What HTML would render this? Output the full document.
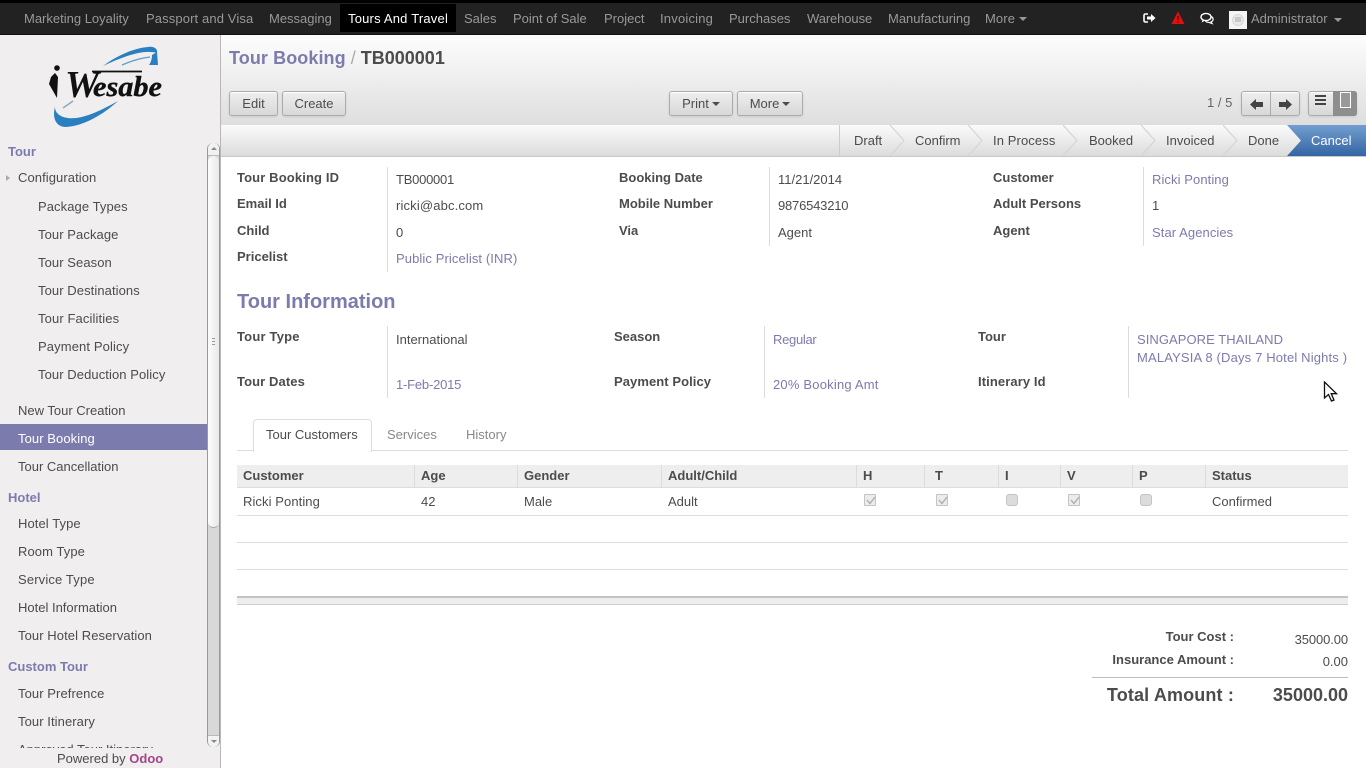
<!DOCTYPE html>
<html><head><meta charset="utf-8"><title>Tour Booking</title>
<style>
html,body{margin:0;padding:0;width:1366px;height:768px;overflow:hidden;background:#fff;font-family:"Liberation Sans",sans-serif;font-size:13px;color:#4c4c4c}
.t{position:absolute;white-space:nowrap;line-height:18px;margin-top:1px}
.s{letter-spacing:.08px}
.b{font-weight:bold}
.l{color:#7c7bad}
.n{color:#999}
.box{position:absolute}
.btn{position:absolute;top:91px;height:23px;line-height:23px;text-align:center;border:1px solid #ababab;border-radius:3px;background:linear-gradient(#efefef,#d8d8d8);box-shadow:0 1px 2px rgba(0,0,0,.1),inset 0 1px 0 #fff;color:#4c4c4c}
.car{display:inline-block;width:0;height:0;border-left:4px solid transparent;border-right:4px solid transparent;border-top:4px solid #4c4c4c;vertical-align:2px;margin-left:3px}
.v{position:absolute;width:1px;background:#dcdcdc}
.h{position:absolute;left:237px;width:1111px;height:1px;background:#ddd}
.th{position:absolute;top:465px;height:22px;width:1px;background:#dcdcdc}
.cb{position:absolute;top:494px;width:10px;height:10px;border:1px solid #c4c4c4;border-radius:3px;background:#dcdcdc}
.cb.c{border-radius:1px;background:#ececec}
</style></head><body>

<!-- top bar -->
<div class="box" style="left:0;top:0;width:1366px;height:35px;background:#222;border-top:3px solid #000;box-sizing:border-box;border-bottom:1px solid #111"></div>
<div class="box" style="left:340px;top:4px;width:116px;height:28px;background:#000"></div>
<div class="t n" style="left:24px;top:9px">Marketing Loyality</div>
<div class="t n" style="left:146px;top:9px;letter-spacing:.12px">Passport and Visa</div>
<div class="t n" style="left:269px;top:9px">Messaging</div>
<div class="t" style="left:348px;top:9px;color:#fff;letter-spacing:.2px">Tours And Travel</div>
<div class="t n" style="left:464px;top:9px">Sales</div>
<div class="t n" style="left:513px;top:9px">Point of Sale</div>
<div class="t n" style="left:604px;top:9px">Project</div>
<div class="t n" style="left:660px;top:9px;letter-spacing:.2px">Invoicing</div>
<div class="t n" style="left:729px;top:9px">Purchases</div>
<div class="t n" style="left:807px;top:9px;letter-spacing:-.1px">Warehouse</div>
<div class="t n" style="left:888px;top:9px">Manufacturing</div>
<div class="t n" style="left:985px;top:9px;letter-spacing:.1px">More</div>
<div class="box" style="left:1019px;top:17px;border-left:4px solid transparent;border-right:4px solid transparent;border-top:4px solid #999"></div>

<svg class="box" style="left:1143px;top:12px" width="13" height="13" viewBox="0 0 13 13"><path d="M5 2H2.500Q1 2 1 3.500v5Q1 10 2.500 10H5" fill="none" stroke="#fff" stroke-width="1.600"/><path d="M4 4.500H8V2l4.500 4L8 10V7.500H4z" fill="#fff"/></svg>
<svg class="box" style="left:1171px;top:11px" width="14" height="14" viewBox="0 0 14 14"><path d="M7 .5 13.500 13H.5z" fill="#e01010"/><rect x="6.400" y="5" width="1.300" height="4" fill="#600"/><rect x="6.400" y="10" width="1.300" height="1.400" fill="#600"/></svg>
<svg class="box" style="left:1200px;top:12px" width="14" height="13" viewBox="0 0 14 13"><ellipse cx="6" cy="5" rx="5" ry="3.600" fill="none" stroke="#fff" stroke-width="1.400"/><path d="M2.500 8 1.500 10.500 5 8.600" fill="#fff"/><path d="M11.500 4.500Q13.500 6 13 8 12.500 9.500 11 10l1 1.500L8.500 10.300Q6.500 10.300 5.500 9.300" fill="none" stroke="#fff" stroke-width="1.200"/></svg>
<div class="box" style="left:1229px;top:11px;width:18px;height:18px;background:#f4f4f4"></div>
<div class="box" style="left:1232px;top:14px;width:10px;height:10px;border:1px solid #d8d8d8;border-radius:50%;background:#e8e8e8"></div>
<div class="box" style="left:1235px;top:17px;width:6px;height:5px;background:#c8c8c8"></div>
<div class="t n" style="left:1251px;top:9px">Administrator</div>
<div class="box" style="left:1334px;top:18px;border-left:4px solid transparent;border-right:4px solid transparent;border-top:4px solid #999"></div>

<!-- sidebar -->
<div class="box" style="left:0;top:35px;width:220px;height:733px;background:#f0eeee;border-right:1px solid #b8b8b8"></div>
<svg class="box" style="left:44px;top:44px" width="122" height="88" viewBox="0 0 122 88">
<path d="M59 22C72 12 90 4 104 3 110 2 114 5 113 9 100 5 80 12 59 22z" fill="#2a7fc0"/>
<path d="M108 11 113 8 114 21H105C107 18 108 15 108 11z" fill="#2a7fc0"/>
<path d="M78 21C87 17 97 14 106 13" fill="none" stroke="#5a9ccb" stroke-width="1.300"/>
<path d="M11 63C8 74 12 83 22 83 40 82 60 70 74 57 58 66 38 76 24 74 16 73 11 69 11 63z" fill="#2a7fc0"/>
<path d="M19 64 29 57" fill="none" stroke="#8aa9be" stroke-width="1.400"/>
<circle cx="13" cy="24" r="2.800" fill="#111"/>
<path d="M11 29 14 33 13 54 5 40 7 33z" fill="#111"/>
<path d="M48 27.500H98" stroke="#111" stroke-width="1.800"/>
<text x="21" y="53" font-family="Liberation Serif,serif" font-style="italic" font-weight="bold" font-size="38" fill="#111" textLength="34" lengthAdjust="spacingAndGlyphs">W</text>
<text x="49" y="52" font-family="Liberation Serif,serif" font-style="italic" font-weight="bold" font-size="29" fill="#111" stroke="#111" stroke-width=".4" textLength="69" lengthAdjust="spacingAndGlyphs">esabe</text>
</svg>

<div class="t l b" style="left:8px;top:142px">Tour</div>
<div class="box" style="left:6px;top:175px;border-top:3.500px solid transparent;border-bottom:3.500px solid transparent;border-left:4px solid #aaa"></div>
<div class="t s" style="left:18px;top:168px">Configuration</div>
<div class="t s" style="left:38px;top:197px">Package Types</div>
<div class="t s" style="left:38px;top:225px">Tour Package</div>
<div class="t s" style="left:38px;top:253px">Tour Season</div>
<div class="t s" style="left:38px;top:281px">Tour Destinations</div>
<div class="t" style="left:38px;top:309px;letter-spacing:.12px">Tour Facilities</div>
<div class="t" style="left:38px;top:337px;letter-spacing:.12px">Payment Policy</div>
<div class="t s" style="left:38px;top:365px">Tour Deduction Policy</div>
<div class="t" style="left:18px;top:401px">New Tour Creation</div>
<div class="box" style="left:0;top:424px;width:207px;height:26px;background:#7c7bad"></div>
<div class="t s" style="left:18px;top:429px;color:#fff">Tour Booking</div>
<div class="t" style="left:18px;top:457px">Tour Cancellation</div>
<div class="t l b" style="left:8px;top:488px">Hotel</div>
<div class="t s" style="left:18px;top:514px">Hotel Type</div>
<div class="t s" style="left:18px;top:542px">Room Type</div>
<div class="t" style="left:18px;top:570px;letter-spacing:.15px">Service Type</div>
<div class="t" style="left:18px;top:598px">Hotel Information</div>
<div class="t s" style="left:18px;top:626px">Tour Hotel Reservation</div>
<div class="t l b" style="left:8px;top:657px">Custom Tour</div>
<div class="t s" style="left:18px;top:684px">Tour Prefrence</div>
<div class="t s" style="left:18px;top:712px">Tour Itinerary</div>
<div class="box" style="left:0;top:736px;width:207px;height:12px;overflow:hidden"><div class="t" style="left:18px;top:4px">Approved Tour Itinerary</div></div>
<div class="t" style="left:57px;top:749px">Powered by <span class="b" style="color:#a24689">Odoo</span></div>

<!-- scrollbar -->
<div class="box" style="left:207px;top:143px;width:13px;height:604px;background:#d8d8d8;border-left:1px solid #999;border-right:1px solid #999;box-sizing:border-box;border-radius:6px"></div>
<div class="box" style="left:208px;top:143px;width:11px;height:13px;background:#f2f2f2;border-radius:6px 6px 0 0;border-bottom:1px solid #bbb;box-sizing:border-box"></div>
<div class="box" style="left:208px;top:156px;width:11px;height:372px;background:linear-gradient(90deg,#fdfdfd,#e8e8e8);border-radius:6px;border-bottom:1px solid #aaa;box-sizing:border-box"></div>
<div class="box" style="left:208px;top:735px;width:11px;height:12px;background:#f2f2f2;border-radius:0 0 6px 6px;border-top:1px solid #bbb;box-sizing:border-box"></div>
<div class="box" style="left:211px;top:147px;border-left:3px solid transparent;border-right:3px solid transparent;border-bottom:3px solid #888"></div>
<div class="box" style="left:211px;top:740px;border-left:3px solid transparent;border-right:3px solid transparent;border-top:3px solid #888"></div>
<div class="box" style="left:212px;top:338px;width:3px;height:8px;background:repeating-linear-gradient(#999 0 1px,transparent 1px 3px)"></div>

<!-- header -->
<div class="box" style="left:221px;top:35px;width:1145px;height:90px;background:linear-gradient(#fdfdfd,#dedede);border-bottom:1px solid #cacaca;box-sizing:content-box"></div>
<div class="t" style="left:229px;top:45px;font-size:18px;line-height:24px;font-weight:bold"><span class="l" style="letter-spacing:.09px">Tour Booking</span> <span style="color:#aaa;font-weight:normal">/</span> TB000001</div>
<div class="btn" style="left:229px;width:47px">Edit</div>
<div class="btn" style="left:282px;width:62px">Create</div>
<div class="btn" style="left:669px;width:62px">Print<span class="car"></span></div>
<div class="btn" style="left:737px;width:64px">More<span class="car"></span></div>
<div class="t" style="left:1207px;top:93px;color:#666">1 / 5</div>
<div class="btn" style="left:1241px;top:91px;width:57px;height:23px"></div>
<div class="box" style="left:1270px;top:91px;width:1px;height:25px;background:#ababab"></div>
<svg class="box" style="left:1250px;top:99px" width="13" height="11" viewBox="0 0 13 11"><path d="M0 5.500 6 0V3H13V8H6V11z" fill="#444"/></svg>
<svg class="box" style="left:1279px;top:99px" width="13" height="11" viewBox="0 0 13 11"><path d="M13 5.500 7 0V3H0V8H7V11z" fill="#444"/></svg>
<div class="btn" style="left:1308px;top:91px;width:47px;height:23px"></div>
<div class="box" style="left:1333px;top:91px;width:24px;height:25px;background:#8e8e8e;border-radius:0 3px 3px 0"></div>
<div class="box" style="left:1315px;top:95px;width:11px;height:2px;background:#444"></div>
<div class="box" style="left:1315px;top:99px;width:11px;height:2px;background:#444"></div>
<div class="box" style="left:1315px;top:103px;width:11px;height:2px;background:#444"></div>
<div class="box" style="left:1340px;top:92px;width:9px;height:14px;border:1px solid #fff;background:#999"></div>

<!-- statusbar -->
<div class="box" style="left:221px;top:125px;width:1145px;height:31px;background:linear-gradient(#fbfbfb,#dcdcdc);border-bottom:1px solid #c8c8c8"></div>
<svg class="box" style="left:835px;top:125px" width="531" height="32" viewBox="835 125 531 32">
<path d="M839.500 125V156" stroke="#ccc" fill="none"/>
<path d="M890 125 904 140.500 890 156M968 125 982 140.500 968 156M1063 125 1077 140.500 1063 156M1141 125 1155 140.500 1141 156M1223 125 1237 140.500 1223 156" fill="none" stroke="#d4d4d4" stroke-width="1.200"/>
<defs><linearGradient id="bl" x1="0" y1="0" x2="0" y2="1"><stop offset="0" stop-color="#729fcf"/><stop offset="1" stop-color="#3465a4"/></linearGradient></defs>
<path d="M1287 125H1366V156H1287L1301 140.500z" fill="url(#bl)"/>
</svg>
<div class="t" style="left:854px;top:131px">Draft</div>
<div class="t" style="left:915px;top:131px">Confirm</div>
<div class="t" style="left:993px;top:131px;letter-spacing:.1px">In Process</div>
<div class="t" style="left:1089px;top:131px">Booked</div>
<div class="t" style="left:1166px;top:131px">Invoiced</div>
<div class="t" style="left:1248px;top:131px">Done</div>
<div class="t" style="left:1311px;top:131px;color:#fff">Cancel</div>

<!-- form 1 -->
<div class="v" style="left:387px;top:167px;height:105px"></div>
<div class="v" style="left:769px;top:167px;height:79px"></div>
<div class="v" style="left:1143px;top:167px;height:79px"></div>
<div class="t b" style="left:237px;top:168px;letter-spacing:.13px">Tour Booking ID</div>
<div class="t b" style="left:237px;top:194px">Email Id</div>
<div class="t b" style="left:237px;top:221px">Child</div>
<div class="t b" style="left:237px;top:247px">Pricelist</div>
<div class="t" style="left:396px;top:170px;letter-spacing:-.25px">TB000001</div>
<div class="t" style="left:396px;top:196px;letter-spacing:.15px">ricki@abc.com</div>
<div class="t" style="left:396px;top:223px">0</div>
<div class="t l" style="left:396px;top:249px;letter-spacing:.1px">Public Pricelist (INR)</div>
<div class="t b" style="left:619px;top:168px">Booking Date</div>
<div class="t b" style="left:619px;top:194px">Mobile Number</div>
<div class="t b" style="left:619px;top:221px">Via</div>
<div class="t" style="left:778px;top:170px">11/21/2014</div>
<div class="t" style="left:778px;top:196px;letter-spacing:-.2px">9876543210</div>
<div class="t" style="left:778px;top:223px">Agent</div>
<div class="t b" style="left:993px;top:168px">Customer</div>
<div class="t b" style="left:993px;top:194px">Adult Persons</div>
<div class="t b" style="left:993px;top:221px">Agent</div>
<div class="t l s" style="left:1152px;top:170px">Ricki Ponting</div>
<div class="t" style="left:1152px;top:196px">1</div>
<div class="t l s" style="left:1152px;top:223px">Star Agencies</div>

<div class="t l b" style="left:237px;top:289px;font-size:20px;line-height:24px">Tour Information</div>

<!-- form 2 -->
<div class="v" style="left:387px;top:326px;height:72px"></div>
<div class="v" style="left:764px;top:326px;height:72px"></div>
<div class="v" style="left:1128px;top:326px;height:72px"></div>
<div class="t b" style="left:237px;top:327px;letter-spacing:.2px">Tour Type</div>
<div class="t b" style="left:237px;top:372px;letter-spacing:.1px">Tour Dates</div>
<div class="t" style="left:396px;top:330px">International</div>
<div class="t l" style="left:396px;top:375px;letter-spacing:-.2px">1-Feb-2015</div>
<div class="t b" style="left:614px;top:327px">Season</div>
<div class="t b" style="left:614px;top:372px;letter-spacing:.07px">Payment Policy</div>
<div class="t l" style="left:773px;top:330px;letter-spacing:-.3px">Regular</div>
<div class="t l" style="left:773px;top:375px;letter-spacing:.2px">20% Booking Amt</div>
<div class="t b" style="left:978px;top:327px">Tour</div>
<div class="t b" style="left:978px;top:372px;letter-spacing:.1px">Itinerary Id</div>
<div class="t l" style="left:1137px;top:330px;letter-spacing:.06px">SINGAPORE THAILAND</div>
<div class="t l" style="left:1137px;top:348px;letter-spacing:.16px">MALAYSIA 8 (Days 7 Hotel Nights )</div>

<!-- tabs -->
<div class="h" style="top:450px"></div>
<div class="box" style="left:253px;top:419px;width:117px;height:32px;background:#fff;border:1px solid #ddd;border-bottom:0;border-radius:4px 4px 0 0"></div>
<div class="t" style="left:266px;top:425px">Tour Customers</div>
<div class="t" style="left:387px;top:425px;color:#888">Services</div>
<div class="t" style="left:466px;top:425px;color:#888">History</div>

<!-- table -->
<div class="box" style="left:237px;top:465px;width:1111px;height:23px;background:#eee;border-bottom:1px solid #ddd;box-sizing:border-box"></div>
<div class="th" style="left:414px"></div><div class="th" style="left:517px"></div><div class="th" style="left:661px"></div><div class="th" style="left:856px"></div><div class="th" style="left:924px"></div><div class="th" style="left:998px"></div><div class="th" style="left:1060px"></div><div class="th" style="left:1132px"></div><div class="th" style="left:1205px"></div>
<div class="t b" style="left:243px;top:466px">Customer</div>
<div class="t b" style="left:421px;top:466px">Age</div>
<div class="t b" style="left:524px;top:466px">Gender</div>
<div class="t b" style="left:668px;top:466px">Adult/Child</div>
<div class="t b" style="left:863px;top:466px">H</div>
<div class="t b" style="left:935px;top:466px">T</div>
<div class="t b" style="left:1005px;top:466px">I</div>
<div class="t b" style="left:1067px;top:466px">V</div>
<div class="t b" style="left:1139px;top:466px">P</div>
<div class="t b" style="left:1212px;top:466px">Status</div>
<div class="t s" style="left:243px;top:492px">Ricki Ponting</div>
<div class="t" style="left:421px;top:492px">42</div>
<div class="t" style="left:524px;top:492px">Male</div>
<div class="t" style="left:668px;top:492px">Adult</div>
<div class="t" style="left:1212px;top:492px">Confirmed</div>
<div class="cb c" style="left:864px"></div><div class="cb c" style="left:936px"></div><div class="cb" style="left:1006px"></div><div class="cb c" style="left:1068px"></div><div class="cb" style="left:1140px"></div>
<svg class="box" style="left:864px;top:494px" width="13" height="13"><path d="M3 6 6 9.500 11 3" fill="none" stroke="#aaa" stroke-width="1.300"/></svg>
<svg class="box" style="left:936px;top:494px" width="13" height="13"><path d="M3 6 6 9.500 11 3" fill="none" stroke="#aaa" stroke-width="1.300"/></svg>
<svg class="box" style="left:1068px;top:494px" width="13" height="13"><path d="M3 6 6 9.500 11 3" fill="none" stroke="#aaa" stroke-width="1.300"/></svg>
<div class="h" style="top:515px"></div>
<div class="h" style="top:542px"></div>
<div class="h" style="top:569px"></div>
<div class="box" style="left:237px;top:596px;width:1111px;height:9px;background:#eee;border-top:2px solid #c4c4c4;border-bottom:1px solid #ccc;box-sizing:border-box"></div>

<!-- totals -->
<div class="t b" style="right:132px;top:627px">Tour Cost :</div>
<div class="t" style="right:18px;top:630px;letter-spacing:-.1px">35000.00</div>
<div class="t b" style="right:132px;top:650px">Insurance Amount :</div>
<div class="t" style="right:18px;top:652px">0.00</div>
<div class="box" style="left:1092px;top:677px;width:256px;height:1px;background:#bbb"></div>
<div class="t b" style="right:132px;top:682px;font-size:18px;line-height:24px;letter-spacing:.15px">Total Amount :</div>
<div class="t b" style="right:18px;top:682px;font-size:18px;line-height:24px">35000.00</div>

<!-- cursor -->
<svg class="box" style="left:1323px;top:381px" width="15" height="21" viewBox="0 0 15 21"><path d="M1.500 1V17L5.500 13.500 8.500 20 11 19 8.200 12.700H13.500z" fill="#fff" stroke="#111" stroke-width="1.300"/></svg>
</body></html>
